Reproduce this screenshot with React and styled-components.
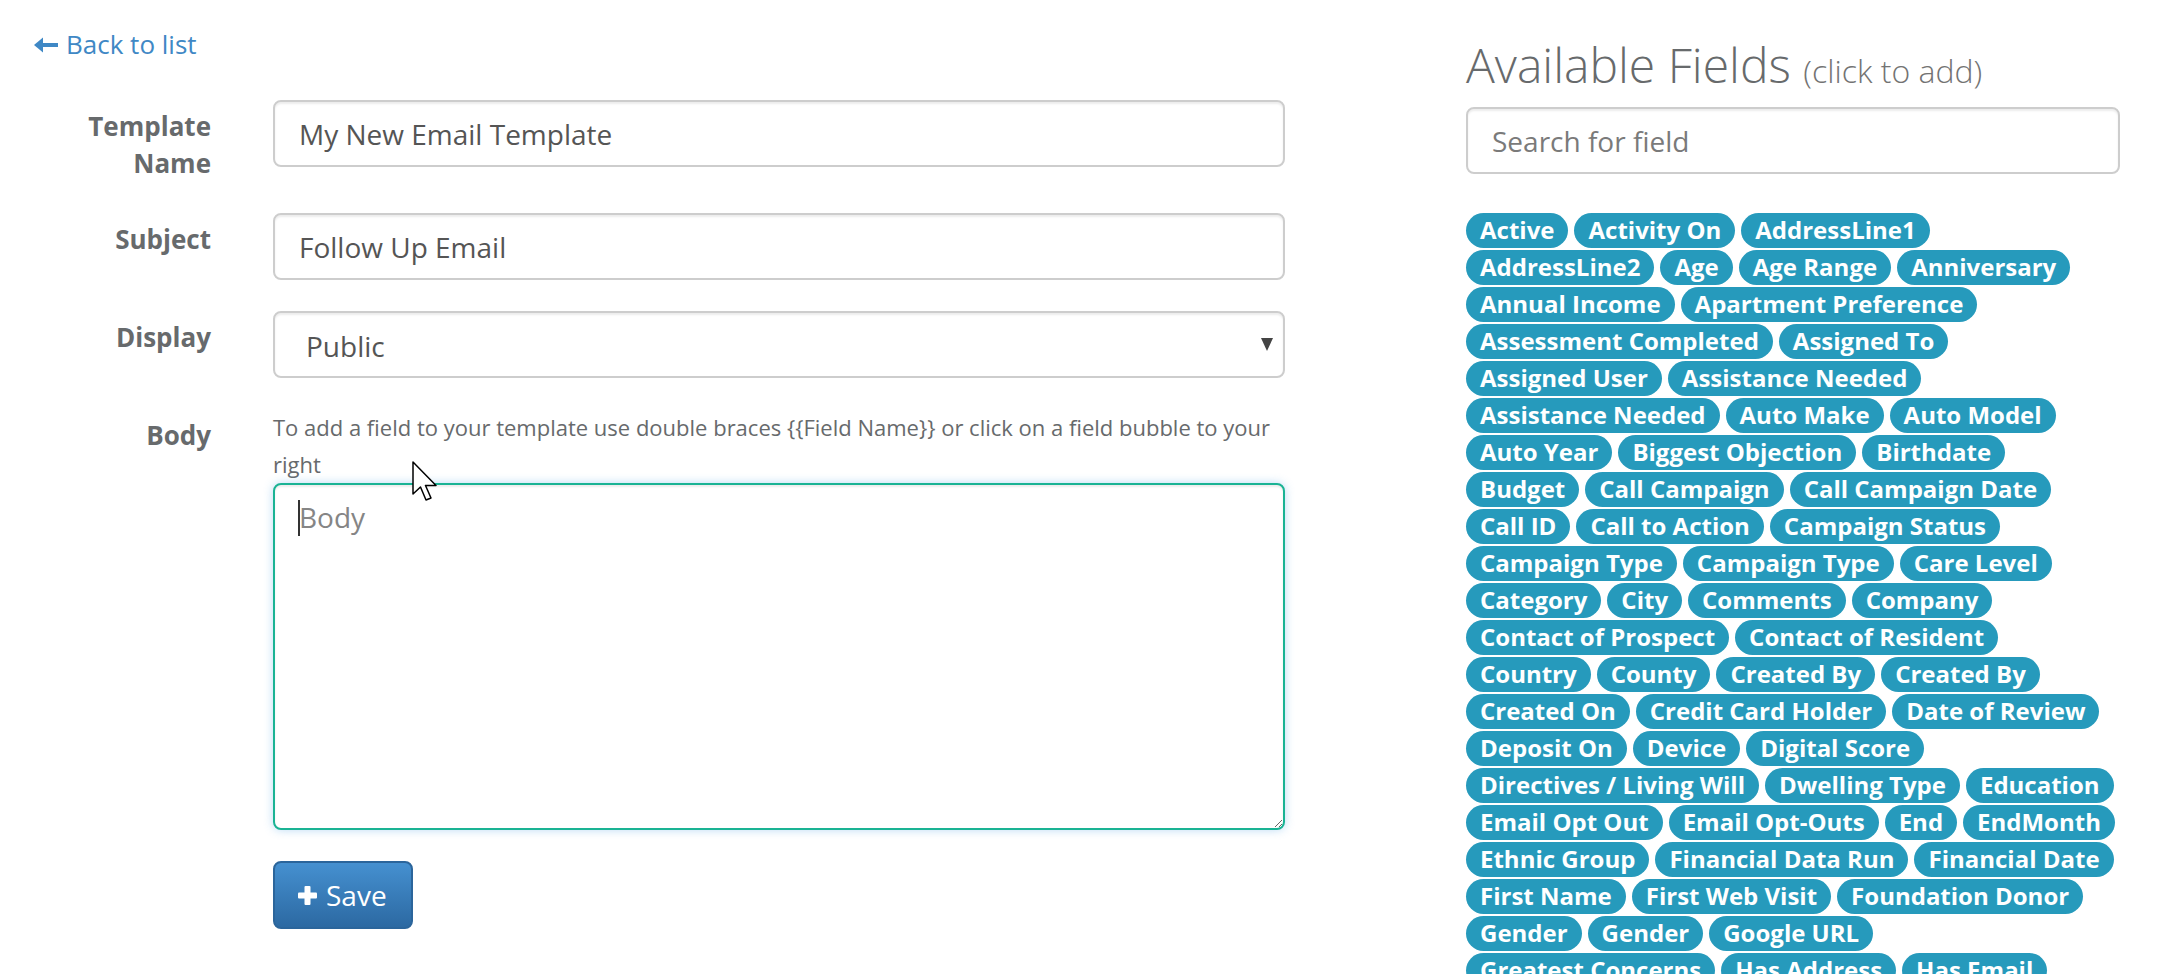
import React from 'react';
import styled, { createGlobalStyle } from 'styled-components';

const GlobalStyle = createGlobalStyle`
  html, body {
    margin: 0;
    padding: 0;
    background: #fff;
    overflow: hidden;
  }
  body {
    font-family: 'Open Sans', 'Liberation Sans', sans-serif;
    color: #676a6c;
  }
  * {
    box-sizing: border-box;
  }
`;

const Page = styled.div`
  position: relative;
  width: 2160px;
  min-height: 974px;
  padding: 26px 0 0 34px;
  display: grid;
  grid-template-columns: 1251px 654px;
  column-gap: 181px;
  align-items: start;
`;

const LeftColumn = styled.div`
  display: flex;
  flex-direction: column;
`;

const RightColumn = styled.div`
  display: flex;
  flex-direction: column;
  padding-top: 12px;
`;

const BackLink = styled.a`
  display: flex;
  align-items: center;
  gap: 8px;
  font-size: 26px;
  line-height: 37px;
  color: #3f88c5;
  text-decoration: none;
  cursor: pointer;
`;

const Form = styled.form`
  margin-top: 37px;
  display: flex;
  flex-direction: column;
  gap: 31px;
`;

const FormRow = styled.div`
  display: grid;
  grid-template-columns: 177px 1012px;
  column-gap: 62px;
  align-items: start;
`;

const Label = styled.label`
  text-align: right;
  font-weight: 700;
  font-size: 26px;
  line-height: 37px;
  padding-top: 8px;
  color: #676a6c;
`;

const TextInput = styled.input`
  width: 100%;
  height: 67px;
  padding: 12px 24px;
  font-family: 'Open Sans', 'Liberation Sans', sans-serif;
  font-size: 28px;
  color: #555;
  background: #fff;
  border: 2px solid #cdcdcd;
  border-radius: 8px;
  box-shadow: inset 0 2px 2px rgba(0, 0, 0, 0.075);
  outline: none;

  &::placeholder {
    color: #7a7a7a;
  }
`;

const SelectBox = styled.div`
  position: relative;

  &::after {
    content: '';
    position: absolute;
    right: 12px;
    top: 27px;
    border-left: 6px solid transparent;
    border-right: 6px solid transparent;
    border-top: 13px solid #444;
  }
`;

const Select = styled.select`
  width: 100%;
  height: 67px;
  padding: 2px 24px 0 31px;
  appearance: none;
  font-family: 'Open Sans', 'Liberation Sans', sans-serif;
  font-size: 28px;
  color: #555;
  background: #fff;
  border: 2px solid #cdcdcd;
  border-radius: 8px;
  box-shadow: inset 0 2px 2px rgba(0, 0, 0, 0.075);
  outline: none;
`;

const BodyField = styled.div`
  display: flex;
  flex-direction: column;
`;

const HelpText = styled.p`
  margin: 0;
  font-size: 22px;
  line-height: 37px;
  color: #676a6c;
`;

const AreaWrap = styled.div`
  position: relative;
`;

const TextArea = styled.textarea`
  display: block;
  width: 100%;
  height: 347px;
  padding: 12px 24px;
  font-family: 'Open Sans', 'Liberation Sans', sans-serif;
  font-size: 28px;
  line-height: 40px;
  color: #555;
  background: #fff;
  border: 2px solid #1ab394;
  border-radius: 8px;
  box-shadow: inset 0 2px 2px rgba(0, 0, 0, 0.075), 0 0 10px rgba(102, 175, 233, 0.45);
  outline: none;

  &::placeholder {
    color: #858585;
  }
`;

const Caret = styled.span`
  position: absolute;
  left: 25px;
  top: 17px;
  width: 2px;
  height: 36px;
  background: #333;
`;

const SaveButton = styled.button`
  display: inline-flex;
  align-items: center;
  gap: 9px;
  height: 68px;
  padding: 0 24px 0 23px;
  font-family: 'Open Sans', 'Liberation Sans', sans-serif;
  font-size: 28px;
  color: #fff;
  background: linear-gradient(to bottom, #4590d0 0%, #2c69a2 100%);
  border: 2px solid #2b659b;
  border-radius: 8px;
  cursor: pointer;
`;

const Heading = styled.h2`
  margin: 0;
  font-size: 48px;
  line-height: 53px;
  font-weight: 300;
  color: #676a6c;
`;

const Small = styled.small`
  font-size: 32px;
  color: #737373;
`;

const SearchWrap = styled.div`
  margin-top: 10px;
`;

const ChipList = styled.div`
  margin-top: 39px;
  display: flex;
  flex-wrap: wrap;
  gap: 2px 6px;
`;

const Chip = styled.span`
  display: inline-block;
  padding: 5px 14px 6px;
  font-size: 24px;
  line-height: 24px;
  font-weight: 700;
  color: #fff;
  background: #269abc;
  border-radius: 18px;
  white-space: nowrap;
  cursor: pointer;
`;

const Pointer = styled.svg`
  position: absolute;
  left: 412px;
  top: 461px;
  pointer-events: none;
`;

const fields = [
  'Active', 'Activity On', 'AddressLine1',
  'AddressLine2', 'Age', 'Age Range', 'Anniversary',
  'Annual Income', 'Apartment Preference',
  'Assessment Completed', 'Assigned To',
  'Assigned User', 'Assistance Needed',
  'Assistance Needed', 'Auto Make', 'Auto Model',
  'Auto Year', 'Biggest Objection', 'Birthdate',
  'Budget', 'Call Campaign', 'Call Campaign Date',
  'Call ID', 'Call to Action', 'Campaign Status',
  'Campaign Type', 'Campaign Type', 'Care Level',
  'Category', 'City', 'Comments', 'Company',
  'Contact of Prospect', 'Contact of Resident',
  'Country', 'County', 'Created By', 'Created By',
  'Created On', 'Credit Card Holder', 'Date of Review',
  'Deposit On', 'Device', 'Digital Score',
  'Directives / Living Will', 'Dwelling Type', 'Education',
  'Email Opt Out', 'Email Opt-Outs', 'End', 'EndMonth',
  'Ethnic Group', 'Financial Data Run', 'Financial Date',
  'First Name', 'First Web Visit', 'Foundation Donor',
  'Gender', 'Gender', 'Google URL',
  'Greatest Concerns', 'Has Address', 'Has Email',
  'Has Phone', 'Home Phone', 'Household Size',
  'Income', 'Last Name', 'Lead Source',
];

const BackArrow = () => (
  <svg width="24" height="16" viewBox="0 0 24 16">
    <polygon points="0,8 9,0.5 9,15.5" fill="#3f88c5" />
    <rect x="7" y="6" width="17" height="4" fill="#3f88c5" />
  </svg>
);

const PlusIcon = () => (
  <svg width="19" height="19" viewBox="0 0 19 19">
    <rect x="6.5" y="0" width="6" height="19" rx="1" fill="#fff" />
    <rect x="0" y="6.5" width="19" height="6" rx="1" fill="#fff" />
  </svg>
);

const App = () => {
  return (
    <>
      <GlobalStyle />
      <Page>
        <LeftColumn>
          <BackLink>
            <BackArrow />
            Back to list
          </BackLink>
          <Form onSubmit={e => e.preventDefault()}>
            <FormRow>
              <Label>Template Name</Label>
              <TextInput defaultValue="My New Email Template" />
            </FormRow>
            <FormRow>
              <Label>Subject</Label>
              <TextInput defaultValue="Follow Up Email" />
            </FormRow>
            <FormRow>
              <Label>Display</Label>
              <SelectBox>
                <Select defaultValue="public">
                  <option value="public">Public</option>
                  <option value="private">Private</option>
                </Select>
              </SelectBox>
            </FormRow>
            <FormRow>
              <Label>Body</Label>
              <BodyField>
                <HelpText>
                  To add a field to your template use double braces {'{{Field Name}}'} or click on a field bubble to your right
                </HelpText>
                <AreaWrap>
                  <TextArea placeholder="Body" />
                  <Caret />
                </AreaWrap>
              </BodyField>
            </FormRow>
            <FormRow>
              <span />
              <div>
                <SaveButton type="submit">
                  <PlusIcon />
                  Save
                </SaveButton>
              </div>
            </FormRow>
          </Form>
        </LeftColumn>

        <RightColumn>
          <Heading>
            Available Fields <Small>(click to add)</Small>
          </Heading>
          <SearchWrap>
            <TextInput placeholder="Search for field" />
          </SearchWrap>
          <ChipList>
            {fields.map((f, i) => (
              <Chip key={i}>{f}</Chip>
            ))}
          </ChipList>
        </RightColumn>

        <Pointer width="28" height="44" viewBox="0 0 28 44">
          <path
            d="M1 1 L1 33 L8.5 26 L14 39 L19 37 L13.5 24.5 L24 24.5 Z"
            fill="#fff"
            stroke="#000"
            strokeWidth="1.5"
            strokeLinejoin="round"
          />
        </Pointer>
      </Page>
    </>
  );
};

export default App;
